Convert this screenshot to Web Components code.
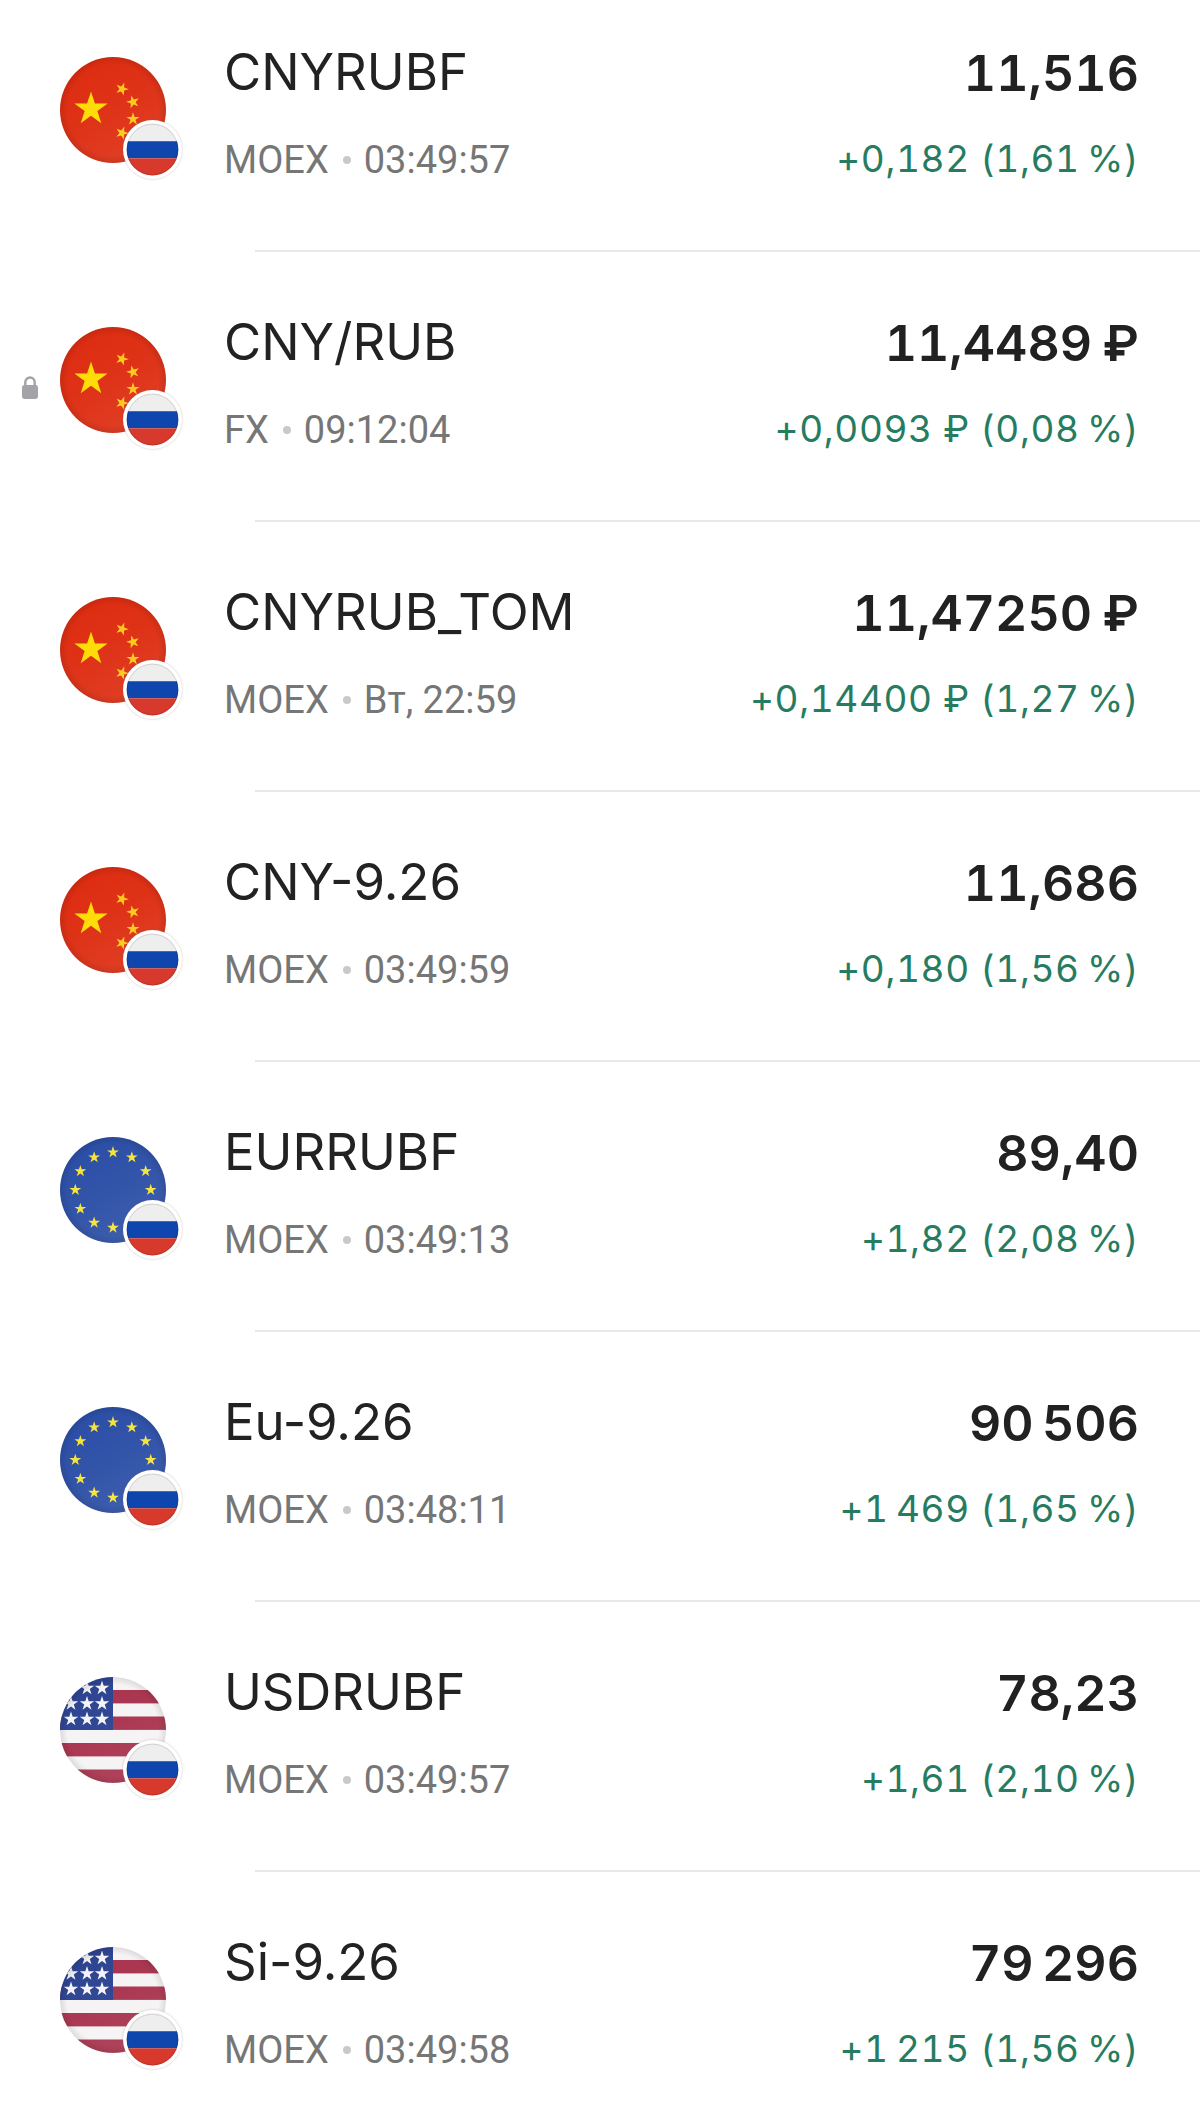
<!DOCTYPE html>
<html lang="ru"><head><meta charset="utf-8"><title>Quotes</title>
<style>
html,body{margin:0;padding:0;background:#fff;height:2106px;overflow:hidden}
</style></head><body>
<quote-list>
<quote-row flag="cn"><span slot="name">CNYRUBF</span><span slot="meta">MOEX</span><span slot="time">03:49:57</span><span slot="price">11,516</span><span slot="change">+0,182 (1,61&#8201;%)</span></quote-row>
<quote-row flag="cn" locked><span slot="name">CNY/RUB</span><span slot="meta">FX</span><span slot="time">09:12:04</span><span slot="price">11,4489 ₽</span><span slot="change">+0,0093 ₽ (0,08&#8201;%)</span></quote-row>
<quote-row flag="cn"><span slot="name">CNYRUB_TOM</span><span slot="meta">MOEX</span><span slot="time">Вт, 22:59</span><span slot="price">11,47250 ₽</span><span slot="change">+0,14400 ₽ (1,27&#8201;%)</span></quote-row>
<quote-row flag="cn"><span slot="name">CNY-9.26</span><span slot="meta">MOEX</span><span slot="time">03:49:59</span><span slot="price">11,686</span><span slot="change">+0,180 (1,56&#8201;%)</span></quote-row>
<quote-row flag="eu"><span slot="name">EURRUBF</span><span slot="meta">MOEX</span><span slot="time">03:49:13</span><span slot="price">89,40</span><span slot="change">+1,82 (2,08&#8201;%)</span></quote-row>
<quote-row flag="eu"><span slot="name">Eu-9.26</span><span slot="meta">MOEX</span><span slot="time">03:48:11</span><span slot="price">90&#8201;506</span><span slot="change">+1&#8201;469 (1,65&#8201;%)</span></quote-row>
<quote-row flag="us"><span slot="name">USDRUBF</span><span slot="meta">MOEX</span><span slot="time">03:49:57</span><span slot="price">78,23</span><span slot="change">+1,61 (2,10&#8201;%)</span></quote-row>
<quote-row flag="us" last><span slot="name">Si-9.26</span><span slot="meta">MOEX</span><span slot="time">03:49:58</span><span slot="price">79&#8201;296</span><span slot="change">+1&#8201;215 (1,56&#8201;%)</span></quote-row>
</quote-list>
<script>
function star(cx,cy,r,rot){
  rot=rot||0;let p=[];
  for(let i=0;i<10;i++){
    const a=(-90+rot+i*36)*Math.PI/180,q=i%2?r*0.382:r;
    p.push((cx+q*Math.cos(a)).toFixed(2)+','+(cy+q*Math.sin(a)).toFixed(2));
  }
  return p.join(' ');
}
const FLAGS={
 cn(){return `<rect width="106" height="106" fill="#dd2c10"/>
   <polygon points="${star(31,52,17.5)}" fill="#fedb00"/>
   <polygon points="${star(62,32,6.8,20)}" fill="#fbc815"/>
   <polygon points="${star(73,45,6.8,-15)}" fill="#fbc815"/>
   <polygon points="${star(73,62,6.8,0)}" fill="#fbc815"/>
   <polygon points="${star(62,76,6.8,20)}" fill="#fbc815"/>`;},
 eu(){let s='<rect width="106" height="106" fill="#2b4ea6"/>';
   for(let i=0;i<12;i++){const a=i*30*Math.PI/180;
     s+=`<polygon points="${star(53+37.7*Math.sin(a),53-37.7*Math.cos(a),6.2)}" fill="#f6e33a"/>`;}
   return s;},
 us(){let s='<rect width="106" height="106" fill="#f5f3f3"/>';
   for(const y of [13,39.5,66,92.5]) s+=`<rect y="${y}" width="106" height="13.4" fill="#a8324d"/>`;
   s+='<rect width="53" height="53" fill="#2c4391"/>';
   for(const y of [11,26.5,42]) for(const x of [11,27,42]){
     if(y===11&&x===11)continue;
     s+=`<polygon points="${star(x,y,7.6)}" fill="#f4f4f6"/>`;}
   return s;}
};
const edge=`<defs><radialGradient id="sh" cx="50%" cy="50%" r="50%">
 <stop offset="0.86" stop-color="#000" stop-opacity="0"/><stop offset="1" stop-color="#000" stop-opacity=".1"/></radialGradient>
 <linearGradient id="gl" x1="0.2" y1="0" x2="0.8" y2="1"><stop offset="0" stop-color="#fff" stop-opacity=".0"/><stop offset=".45" stop-color="#fff" stop-opacity=".03"/><stop offset="1" stop-color="#fff" stop-opacity=".1"/></linearGradient>
 <clipPath id="c"><circle cx="53" cy="53" r="53"/></clipPath></defs>`;

const rowTpl=document.createElement('template');
rowTpl.innerHTML=`<style>
:host{display:block;position:relative;height:270px}
.row{display:flex;height:250px;box-sizing:border-box;padding:0 61px 0 60px}
.pic{flex:none;width:106px;height:106px;margin:57px 58px 0 0;position:relative}
.pic>svg{display:block;filter:blur(.35px)}
.pic>svg.badge{position:absolute;left:63px;top:63px;width:59px;height:59px;filter:blur(.3px) drop-shadow(0 0 1px rgba(120,90,90,.35))}
.lock{position:absolute;left:21px;top:105px;width:18px;height:25px}
.left{flex:1;min-width:0;padding-top:42px}
.right{flex:none;padding-top:43px;text-align:right}
.name{font:400 50.9px/60px Inter,sans-serif;color:#222;white-space:nowrap}
.sub{font:400 38px/44px Roboto,sans-serif;color:#767676;margin-top:36px;display:flex;align-items:center;white-space:nowrap}
.dot{width:8px;height:8px;border-radius:50%;background:#c9c9c9;margin:0 13px 0 14px}
.price{font:600 50px/60px Inter,sans-serif;color:#212121;white-space:nowrap;font-variant-numeric:tabular-nums;word-spacing:-3px}
.change{font:400 37px/44px Inter,sans-serif;color:#267c60;margin-top:34px;white-space:nowrap;font-variant-numeric:tabular-nums;letter-spacing:.6px}
.rule{height:2px;margin-left:255px;background:#e8e8e8}
:host([last]) .rule{display:none}
</style>
<svg class="lock" viewBox="0 0 18 25" aria-hidden="true" part="lock"><path d="M4.3 11V7.2a4.7 4.7 0 0 1 9.4 0V11" fill="none" stroke="#a3a3a8" stroke-width="2.4"/><rect x="1" y="10" width="16" height="14" rx="2.4" fill="#a3a3a8"/></svg>
<div class="row">
 <div class="pic"><svg class="big" width="106" height="106" viewBox="0 0 106 106"></svg><svg class="badge" viewBox="0 0 57 57"><circle cx="28.5" cy="28.5" r="28.5" fill="#fff"/><clipPath id="b"><circle cx="28.5" cy="28.5" r="25"/></clipPath><g clip-path="url(#b)"><rect x="3" y="3" width="51" height="17.5" fill="#eeeeee"/><rect x="3" y="20.5" width="51" height="16.5" fill="#0f46ae"/><rect x="3" y="37" width="51" height="18" fill="#d8392d"/></g><circle cx="28.5" cy="28.5" r="24.5" fill="none" stroke="#000" stroke-opacity=".1"/></svg></div>
 <div class="left"><div class="name"><slot name="name"></slot></div><div class="sub"><slot name="meta"></slot><span class="dot"></span><slot name="time"></slot></div></div>
 <div class="right"><div class="price"><slot name="price"></slot></div><div class="change"><slot name="change"></slot></div></div>
</div>
<div class="rule"></div>`;
class QuoteRow extends HTMLElement{
  constructor(){super();this.attachShadow({mode:'open'}).appendChild(rowTpl.content.cloneNode(true));}
  connectedCallback(){
    const r=this.shadowRoot;
    const f=FLAGS[this.getAttribute('flag')]();
    r.querySelector('.big').innerHTML=edge+`<g clip-path="url(#c)">${f}<rect width="106" height="106" fill="url(#gl)"/><circle cx="53" cy="53" r="53" fill="url(#sh)"/></g>`;
    if(!this.hasAttribute('locked'))r.querySelector('.lock').remove();
  }
}
customElements.define('quote-row',QuoteRow);
class QuoteList extends HTMLElement{
  constructor(){super();this.attachShadow({mode:'open'}).innerHTML='<style>:host{display:block;width:1200px;background:#fff}</style><slot></slot>';}
}
customElements.define('quote-list',QuoteList);
</script>
</body></html>
